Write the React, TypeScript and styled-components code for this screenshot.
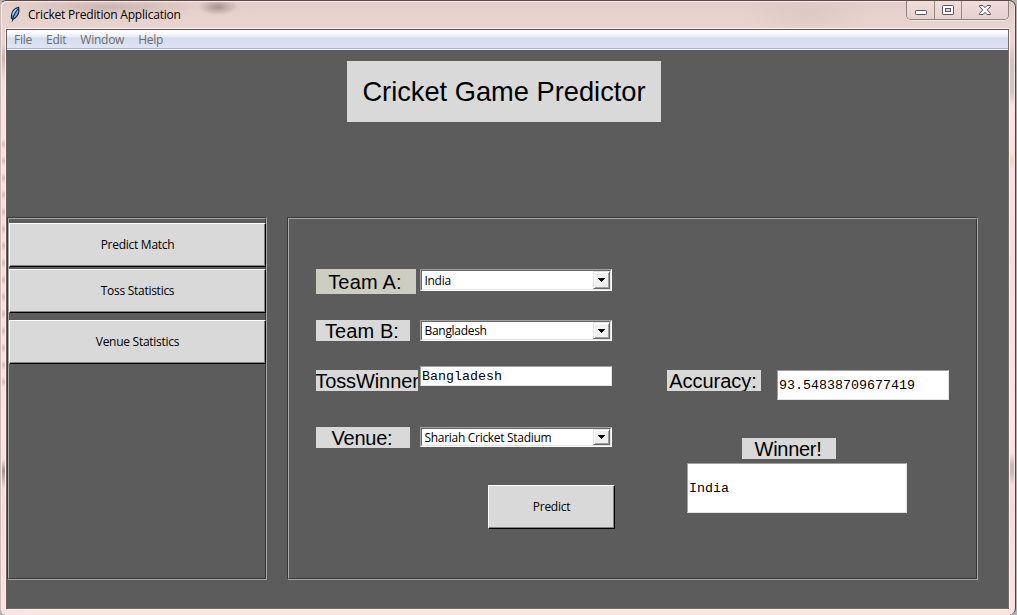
import React from "react";
import styled, { createGlobalStyle } from "styled-components";

const Global = createGlobalStyle`
  html, body { margin: 0; padding: 0; overflow: hidden; background: #b9b4b3; }
  *, *::before, *::after { box-sizing: border-box; }
`;

const uiFont = `"Open Sans", "Noto Sans", sans-serif`;

const Desktop = styled.div`
  width: 1017px;
  height: 615px;
  padding-right: 1px;
  background: linear-gradient(#b9b4b3, #a9a9a9 20%, #b4b2b2);
`;

const Window = styled.div`
  height: 615px;
  display: flex;
  flex-direction: column;
  border-top: 1px solid #5c4a49;
  border-right: 1px solid #4b4342;
  border-left: 1px solid #cdbab6;
  border-radius: 6px 7px 7px 6px;
  box-shadow: inset 1px 1px 0 #f7e9e6, inset -1px 0 0 #f3e3e0;
  padding: 0 6px 6px 5px;
  background:
    radial-gradient(ellipse 90px 8px at 110px 6px, #bda6a2a0, transparent),
    radial-gradient(ellipse 20px 8px at 217px 6px, #8d7774b0, transparent),
    radial-gradient(ellipse 60px 30px at 806px 12px, #d8c3be90, transparent),
    linear-gradient(transparent, #b9a5a2b0 12px, #b9a5a2b0 20px, transparent 32px) 100% 452px / 8px 32px no-repeat,
    linear-gradient(transparent, #cbb9b5b0 16px, #cbb9b5b0 50px, transparent 62px) 100% 42px / 8px 62px no-repeat,
    linear-gradient(transparent, #ecd0a8c0 8px, transparent 16px) 100% 152px / 8px 16px no-repeat,
    linear-gradient(transparent, #8f7c7ac0 12px, transparent 30px) 0 458px / 6px 30px no-repeat,
    repeating-linear-gradient(transparent 0, transparent 3px, #c5aca8b0 8px, transparent 13px, transparent 17px) 0 135px / 6px 255px no-repeat,
    linear-gradient(transparent, #b9a5a2b0 15px, transparent 36px) 0 42px / 6px 36px no-repeat,
    linear-gradient(#e3cdc8, #e9d5d1 30px, #ecd9d5 60px, #fbe4df 110px, #f5ddd8 260px, #fde6e1 430px, #f3dcd8 500px, #fce5e0);
`;

const TitleBar = styled.header`
  height: 28px;
  flex: none;
  display: flex;
  align-items: flex-start;
`;

const FeatherIcon = styled.svg`
  width: 12px;
  height: 17px;
  margin: 5px 0 0 3px;
`;

const WindowTitle = styled.h1`
  margin: 5px auto 0 7px;
  font: 400 12px/17px ${uiFont};
  letter-spacing: -0.2px;
  color: #000;
  white-space: nowrap;
`;

const Captions = styled.div`
  display: flex;
  height: 19px;
  border: 1px solid #8f7f7d;
  border-top: 0;
  border-radius: 0 0 5px 5px;
  box-shadow: 0 1px 0 #f4e6e3;
`;

const CaptionButton = styled.div<{ $w: number }>`
  width: ${(p) => p.$w}px;
  display: flex;
  justify-content: center;
  background: linear-gradient(#f0dedb, #e6d0cc);
  & + & { border-left: 1px solid #9b8a88; }
  &:first-child { border-radius: 0 0 0 4px; }
  &:last-child { border-radius: 0 0 4px 0; }
  svg { display: block; height: 18px; }
`;

const Client = styled.div`
  flex: 1;
  display: flex;
  flex-direction: column;
  border: 1px solid #766968;
  border-top-color: #5c5352;
  border-left-color: #6b5f5e;
  outline: 1px solid #fdf2ef;
  background: #5c5c5c;
`;

const MenuBar = styled.nav`
  height: 20px;
  flex: none;
  display: flex;
  gap: 14px;
  padding-left: 7px;
  border-bottom: 1px solid #eef1f9;
  background: linear-gradient(#fff 0, #fafbfd 3px, #e6eaf4 7px, #d5dcee 8px, #dfe5f5 18px, #aeb6cb 18px, #aeb6cb 19px);
`;

const MenuItem = styled.span`
  font: 400 12px/20px ${uiFont};
  letter-spacing: -0.25px;
  color: #6d6d6d;
`;

const Banner = styled.h2`
  width: 314px;
  height: 61px;
  margin: 11px 0 0 340px;
  background: #d9d9d9;
  color: #000;
  text-align: center;
  font: 400 27.25px/61px "Liberation Sans", Arial, sans-serif;
  white-space: nowrap;
`;

const Panels = styled.div`
  display: flex;
  gap: 20px;
  margin-top: 95px;
`;

const Groove = styled.section<{ $w: number }>`
  width: ${(p) => p.$w}px;
  height: 363px;
  border: 1px solid;
  border-color: #383838 #a8a8a8 #a8a8a8 #383838;

  & > div {
    height: 361px;
    border: 1px solid;
    border-color: #a8a8a8 #383838 #383838 #a8a8a8;
  }
`;

const Sidebar = styled.div`
  display: flex;
  flex-direction: column;
  padding-top: 4px;
`;

const PushButton = styled.button<{ $w: number; $top?: number }>`
  flex: none;
  width: ${(p) => p.$w}px;
  height: 44px;
  margin: ${(p) => p.$top ?? 0}px 0 0;
  padding: 0;
  border: 1px solid;
  border-color: #fff #000 #000 #fff;
  border-radius: 0;
  box-shadow: inset -1px -1px 0 #828282;
  background: #d9d9d9;
  color: #000;
  font: 400 12px/42px ${uiFont};
  letter-spacing: -0.27px;
`;

const Form = styled.div`
  display: flex;
  padding-left: 27px;
`;

const Inputs = styled.div`
  width: 351px;
  padding-top: 50px;
`;

const Row = styled.div<{ $h: number }>`
  height: ${(p) => p.$h}px;
  display: flex;
  align-items: flex-start;
`;

const Label = styled.label<{ $w?: number; $h?: number; $right?: number; $top?: number; $tan?: boolean; $ls?: number }>`
  flex: none;
  width: ${(p) => p.$w ?? 94}px;
  height: ${(p) => p.$h ?? 21}px;
  margin-right: ${(p) => p.$right ?? 10}px;
  margin-top: ${(p) => p.$top ?? 0}px;
  padding-right: ${(p) => (p.$w === 102 ? 0 : 2)}px;
  display: flex;
  justify-content: center;
  overflow: hidden;
  background: ${(p) => (p.$tan ? "#cdcdc1" : "#d9d9d9")};
  color: #000;
  font: 400 20px/${(p) => (p.$h ?? 21) + 1}px "Liberation Sans", Arial, sans-serif;
  letter-spacing: ${(p) => p.$ls ?? 0}px;
  white-space: nowrap;
`;

const Combo = styled.div<{ $h: number }>`
  width: 192px;
  height: ${(p) => p.$h}px;
  display: flex;
  border: 1px solid;
  border-color: #a0a0a0 #fff #fff #a0a0a0;
  background: #fff;
`;

const ComboInner = styled.div`
  flex: 1;
  min-width: 0;
  display: flex;
  border: 1px solid;
  border-color: #696969 #e3e3e3 #e3e3e3 #696969;
`;

const ComboText = styled.span<{ $lh: number }>`
  flex: 1;
  overflow: hidden;
  padding-left: 2.5px;
  font: 400 12px/${(p) => p.$lh}px ${uiFont};
  letter-spacing: -0.3px;
  color: #000;
  white-space: nowrap;
`;

const ComboArrow = styled.span`
  width: 17px;
  display: flex;
  align-items: center;
  justify-content: center;
  border: 1px solid;
  border-color: #e3e3e3 #696969 #696969 #e3e3e3;
  box-shadow: inset 1px 1px 0 #fff, inset -1px -1px 0 #a0a0a0;
  background: #f0f0f0;
  svg { display: block; }
`;

const Entry = styled.div<{ $w: number; $h: number; $top?: number; $left?: number }>`
  flex: none;
  width: ${(p) => p.$w}px;
  height: ${(p) => p.$h}px;
  margin: ${(p) => p.$top ?? 0}px 0 0 ${(p) => p.$left ?? 0}px;
  padding-left: 1px;
  border: 1px solid;
  border-color: #a0a0a0 #e3e3e3 #e3e3e3 #a0a0a0;
  background: #fff;
  color: #000;
  font: 400 13.333px/${(p) => p.$h - 1}px "Liberation Mono", "Courier New", monospace;
`;

const PredictSlot = styled.div`
  padding-left: 172px;
`;

const Results = styled.div`
  padding-top: 151px;
`;

const WinnerSlot = styled.div`
  padding-left: 75px;
`;

function Select({ value, h, lh }: { value: string; h: number; lh: number }) {
  return (
    <Combo $h={h}>
      <ComboInner>
        <ComboText $lh={lh}>{value}</ComboText>
        <ComboArrow>
          <svg width="7" height="4" viewBox="0 0 7 4" shapeRendering="crispEdges">
            <path d="M0 0H7V1H6V2H5V3H4V4H3V3H2V2H1V1H0Z" fill="#000" />
          </svg>
        </ComboArrow>
      </ComboInner>
    </Combo>
  );
}

export default function App() {
  return (
    <Desktop>
      <Global />
      <Window>
        <TitleBar>
          <FeatherIcon viewBox="0 0 12 17">
            <path d="M9.7 1.3C6.2 2 3.4 4.6 2.6 8.3L2.4 12L4 13.3C7.3 11.8 9.5 8.7 9.9 5.2Z" fill="#4d8fd6" stroke="#13202f" strokeWidth="1.1" />
            <path d="M8.6 3.2C6.5 5.6 4.7 8.8 3.2 15.6" fill="none" stroke="#10151d" strokeWidth="0.9" />
            <path d="M7.4 3.2C5.4 4.8 4.1 6.6 3.8 9" fill="none" stroke="#b5dcff" strokeWidth="1.2" />
            <path d="M8.8 5C8 7.5 6.8 9.5 5 11" fill="none" stroke="#7db8f0" strokeWidth="1" />
          </FeatherIcon>
          <WindowTitle>Cricket Predition Application</WindowTitle>
          <Captions>
            <CaptionButton $w={27}>
              <svg width="14" viewBox="0 0 14 18">
                <rect x="1.5" y="9.5" width="11" height="4" rx="0.8" fill="#fff" stroke="#55566b" />
              </svg>
            </CaptionButton>
            <CaptionButton $w={27}>
              <svg width="14" viewBox="0 0 14 18">
                <rect x="1.5" y="4.5" width="11" height="9" rx="0.8" fill="#fff" stroke="#55566b" />
                <rect x="4.5" y="7.5" width="5" height="3" fill="#e6d2ce" stroke="#55566b" />
              </svg>
            </CaptionButton>
            <CaptionButton $w={47}>
              <svg width="14" viewBox="0 0 14 18">
                <path d="M1.5 4.5H5L7 6.7L9 4.5H12.5V5.5L9.3 9L12.5 12.5V13.5H9L7 11.3L5 13.5H1.5V12.5L4.7 9L1.5 5.5Z" fill="#fff" stroke="#55566b" />
              </svg>
            </CaptionButton>
          </Captions>
        </TitleBar>
        <Client>
          <MenuBar>
            <MenuItem>File</MenuItem>
            <MenuItem>Edit</MenuItem>
            <MenuItem>Window</MenuItem>
            <MenuItem>Help</MenuItem>
          </MenuBar>
          <Banner>Cricket Game Predictor</Banner>
          <Panels>
            <Groove $w={260}>
              <Sidebar>
                <PushButton $w={257}>Predict Match</PushButton>
                <PushButton $w={257} $top={2}>Toss Statistics</PushButton>
                <PushButton $w={257} $top={7}>Venue Statistics</PushButton>
              </Sidebar>
            </Groove>
            <Groove $w={691}>
              <Form>
                <Inputs>
                  <Row $h={51}>
                    <Label $w={100} $h={25} $right={4} $ls={0.2} $tan>Team A:</Label>
                    <Select value="India" h={22} lh={19} />
                  </Row>
                  <Row $h={46}>
                    <Label $ls={0.1}>Team B:</Label>
                    <Select value="Bangladesh" h={21} lh={18} />
                  </Row>
                  <Row $h={61}>
                    <Label $w={102} $right={2} $top={4} $ls={-0.1}>TossWinner</Label>
                    <Entry $w={192} $h={20}>Bangladesh</Entry>
                  </Row>
                  <Row $h={58}>
                    <Label $ls={-0.25}>Venue:</Label>
                    <Select value="Shariah Cricket Stadium" h={20} lh={18} />
                  </Row>
                  <PredictSlot>
                    <PushButton $w={127}>Predict</PushButton>
                  </PredictSlot>
                </Inputs>
                <Results>
                  <Row $h={68}>
                    <Label $right={16} $ls={-0.05}>Accuracy:</Label>
                    <Entry $w={172} $h={30}>93.54838709677419</Entry>
                  </Row>
                  <WinnerSlot>
                    <Label $ls={-0.3}>Winner!</Label>
                  </WinnerSlot>
                  <Entry $w={220} $h={50} $top={4} $left={20}>India</Entry>
                </Results>
              </Form>
            </Groove>
          </Panels>
        </Client>
      </Window>
    </Desktop>
  );
}
